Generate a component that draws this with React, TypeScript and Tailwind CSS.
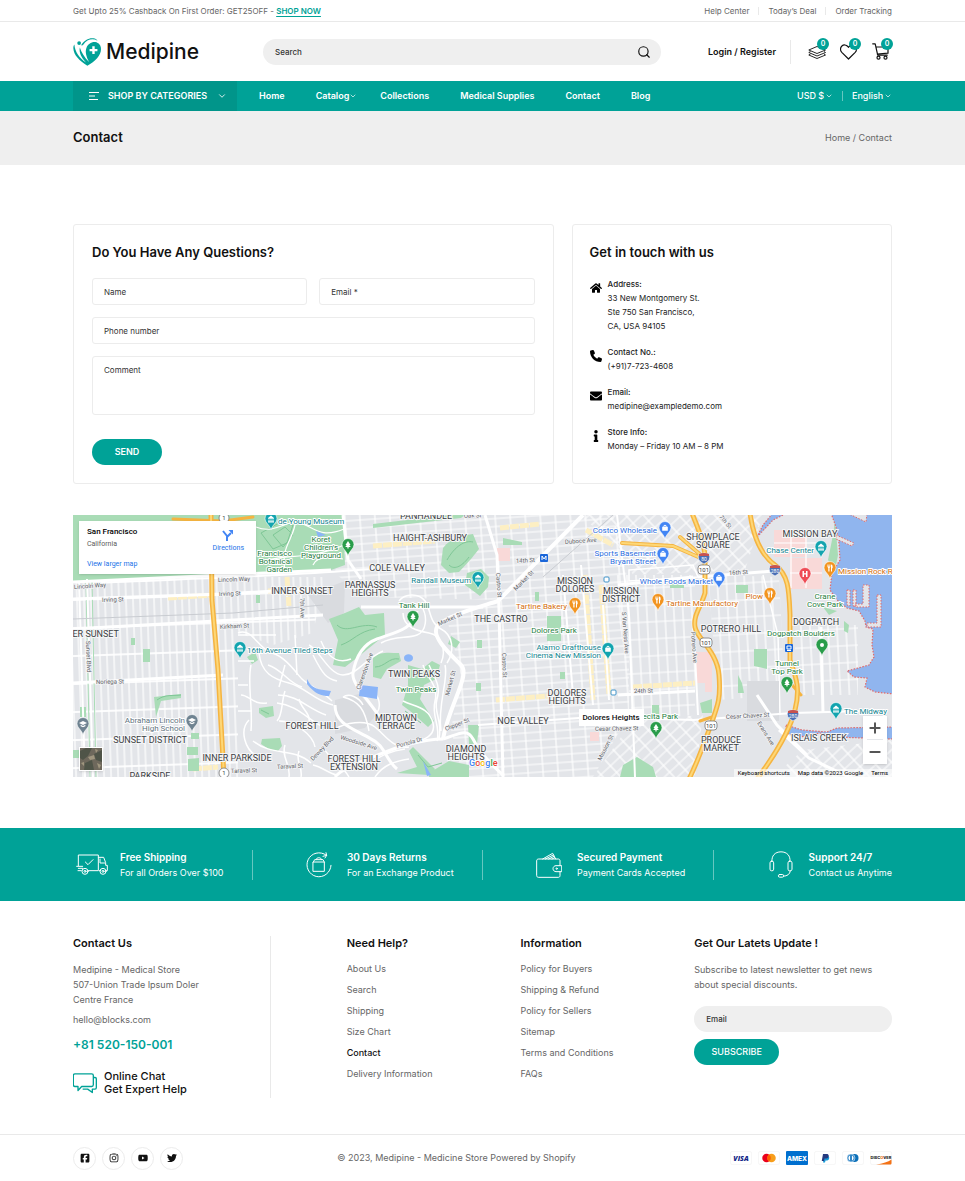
import * as React from "react"
import { ChevronDown, Minus, Plus, Search } from "lucide-react"
import { FaEnvelope, FaHome, FaInfo, FaInstagram, FaTwitter, FaYoutube } from "react-icons/fa"
import { FaPhone, FaSquareFacebook } from "react-icons/fa6"

const topLinks = ["Help Center", "Today’s Deal", "Order Tracking"]

const navItems = [
  { name: "Home" },
  { name: "Catalog", hasMenu: true },
  { name: "Collections" },
  { name: "Medical Supplies" },
  { name: "Contact" },
  { name: "Blog" },
]

const contactInfo = [
  { title: "Address:", lines: ["33 New Montgomery St.", "Ste 750 San Francisco,", "CA, USA 94105"], icon: FaHome },
  { title: "Contact No.:", lines: ["(+91)7-723-4608"], icon: FaPhone },
  { title: "Email:", lines: ["medipine@exampledemo.com"], icon: FaEnvelope },
  { title: "Store Info:", lines: ["Monday – Friday 10 AM – 8 PM"], icon: FaInfo },
]

const helpLinks = ["About Us", "Search", "Shipping", "Size Chart", "Contact", "Delivery Information"]
const infoLinks = ["Policy for Buyers", "Shipping & Refund", "Policy for Sellers", "Sitemap", "Terms and Conditions", "FAQs"]

const socials = [
  { name: "Facebook", icon: FaSquareFacebook },
  { name: "Instagram", icon: FaInstagram },
  { name: "YouTube", icon: FaYoutube },
  { name: "Twitter", icon: FaTwitter },
]

/* ---------- icons ---------- */

function LogoMark() {
  return (
    <svg viewBox="0 0 82 82" className="size-7" aria-hidden="true">
      <g fill="#00a297">
        <circle cx="18" cy="15" r="5.5" />
        <path d="M42 81C18 66 2 50 1 30c0-5 1-8 3-11 2 22 14 39 34 53C24 57 17 42 20 28c5 14 13 29 27 42-8-15-12-29-8-40 4-12 15-19 26-18 11 2 17 10 17 20 0 20-17 36-40 49z" />
        <path d="M25 19C33 7 47-1 60 1c5 1 9 3 12 7-14-8-31-5-42 12-2 3-7 3-5-1z" />
      </g>
      <path d="M60 24v23M48.500 35.500h23" stroke="#fff" strokeWidth="7" />
    </svg>
  )
}

function StackIcon() {
  return (
    <svg viewBox="0 0 20 16" className="h-4 w-5" fill="none" stroke="currentColor" strokeWidth="0.900" strokeLinejoin="round" aria-hidden="true">
      <path d="M9 2.500 17.500 6 9 9.500 .8 6z" />
      <path d="M2.500 7.500.8 8.500 9 12l8.500-3.500L16 7.500M2.500 10l-1.700 1L9 14.500l8.500-3.500L16 10" />
    </svg>
  )
}

function HeartIcon() {
  return (
    <svg viewBox="0 0 18 16" className="h-4 w-[18px]" fill="none" stroke="currentColor" strokeWidth="1.200" strokeLinejoin="round" aria-hidden="true">
      <path d="M8.500 15 1.800 8.300C0 6.400.100 3.600 1.900 2c1.800-1.600 4.400-1.300 5.900.500L8.500 3.400l.7-.9C10.700.700 13.300.400 15.100 2c1.800 1.600 1.900 4.400.1 6.300z" />
    </svg>
  )
}

function CartIcon() {
  return (
    <svg viewBox="0 0 18 17" className="h-[17px] w-[18px]" fill="none" stroke="currentColor" strokeWidth="1.200" strokeLinejoin="round" strokeLinecap="round" aria-hidden="true">
      <path d="M.7.8h2.500l2.500 11.400h9.500M4 4h12v6.200L5.300 11" />
      <circle cx="6.500" cy="14.700" r="1.500" />
      <circle cx="13.500" cy="14.700" r="1.500" />
    </svg>
  )
}

function TruckIcon() {
  return (
    <svg viewBox="0 0 96 66" className="h-[22px] w-8" fill="none" stroke="currentColor" strokeWidth="3" strokeLinejoin="round" strokeLinecap="round" aria-hidden="true">
      <path d="M7 35V3h60v47H37M7 43h13M2 37h18M6 50h10M67 10h16l6 16v8h5v16h-6M70 50h4M72 15v12h15" />
      <path d="m28 24 8 8 15-15" />
      <circle cx="27" cy="52" r="9" />
      <circle cx="27" cy="52" r="3" />
      <circle cx="81" cy="52" r="9" />
      <circle cx="81" cy="52" r="3" />
    </svg>
  )
}

function ReturnIcon() {
  return (
    <svg viewBox="0 0 78 78" className="size-[26px]" fill="none" stroke="currentColor" strokeWidth="3" strokeLinejoin="round" strokeLinecap="round" aria-hidden="true">
      <path d="M60 9A36 36 0 1 0 75 40" />
      <path d="m51 13 11-3-2-8M62 10l-5 8" />
      <path d="M22 30h33v28H22zM22 30l4-7h25l4 7M30 23c0-8 17-8 17 0" />
    </svg>
  )
}

function WalletIcon() {
  return (
    <svg viewBox="0 0 78 78" className="size-[26px]" fill="none" stroke="currentColor" strokeWidth="3" strokeLinejoin="round" strokeLinecap="round" aria-hidden="true">
      <path d="M72 40V26c0-3-2-5-5-5H8c-4 0-6 2-6 6v43c0 4 2 6 6 6h59c3 0 5-2 5-5V59" />
      <path d="M76 41H60c-5 0-9 4-9 9s4 9 9 9h16z" />
      <circle cx="62" cy="50" r="2" />
      <path d="M20 21 50 4l9 17M28 21l24-12M38 21l16-8M48 21l8-4" />
    </svg>
  )
}

function HeadsetIcon() {
  return (
    <svg viewBox="0 0 72 80" className="h-[27px] w-6" fill="none" stroke="currentColor" strokeWidth="3" strokeLinejoin="round" strokeLinecap="round" aria-hidden="true">
      <path d="M9 31C7 14 18 2 36 2s29 12 27 29M64 59c-1 10-9 16-20 16" />
      <rect x="3" y="30" width="11" height="29" rx="5" />
      <rect x="57" y="30" width="12" height="29" rx="5" />
      <rect x="28" y="70" width="16" height="8" rx="4" />
    </svg>
  )
}

function ChatIcon() {
  return (
    <svg viewBox="0 0 72 62" className="h-[21px] w-6" fill="none" stroke="#00a297" strokeWidth="4" strokeLinejoin="round" aria-hidden="true">
      <path d="M6 2h50c3 0 5 2 5 5v28c0 3-2 5-5 5H26L15 52V40H6c-3 0-5-2-5-5V7c0-3 2-5 5-5z" />
      <path d="M62 13h4c3 0 4 2 4 4v26c0 3-1 5-4 5h-8v10L44 48H29" />
    </svg>
  )
}

const features = [
  { title: "Free Shipping", text: "For all Orders Over $100", icon: TruckIcon },
  { title: "30 Days Returns", text: "For an Exchange Product", icon: ReturnIcon },
  { title: "Secured Payment", text: "Payment Cards Accepted", icon: WalletIcon },
  { title: "Support 24/7", text: "Contact us Anytime", icon: HeadsetIcon },
]

/* ---------- map ---------- */

const areas: { x: number; y: number; lines: string[] }[] = [
  { x: 353, y: 4, lines: ["PANHANDLE"] },
  { x: 229, y: 79, lines: ["INNER SUNSET"] },
  { x: 357, y: 26, lines: ["HAIGHT-ASHBURY"] },
  { x: 324, y: 56, lines: ["COLE VALLEY"] },
  { x: 297, y: 73, lines: ["PARNASSUS", "HEIGHTS"] },
  { x: 428, y: 107, lines: ["THE CASTRO"] },
  { x: 502, y: 69, lines: ["MISSION", "DOLORES"] },
  { x: 548, y: 79, lines: ["MISSION", "DISTRICT"] },
  { x: 640, y: 25, lines: ["SHOWPLACE", "SQUARE"] },
  { x: 737, y: 22, lines: ["MISSION BAY"] },
  { x: 658, y: 117, lines: ["POTRERO HILL"] },
  { x: 743, y: 110, lines: ["DOGPATCH"] },
  { x: 341, y: 162, lines: ["TWIN PEAKS"] },
  { x: 14, y: 122, lines: ["OUTER SUNSET"] },
  { x: 77, y: 228, lines: ["SUNSET DISTRICT"] },
  { x: 164, y: 246, lines: ["INNER PARKSIDE"] },
  { x: 77, y: 264, lines: ["PARKSIDE"] },
  { x: 239, y: 214, lines: ["FOREST HILL"] },
  { x: 281, y: 247, lines: ["FOREST HILL", "EXTENSION"] },
  { x: 323, y: 206, lines: ["MIDTOWN", "TERRACE"] },
  { x: 393, y: 237, lines: ["DIAMOND", "HEIGHTS"] },
  { x: 450, y: 209, lines: ["NOE VALLEY"] },
  { x: 494, y: 181, lines: ["DOLORES", "HEIGHTS"] },
  { x: 648, y: 228, lines: ["PRODUCE", "MARKET"] },
  { x: 746, y: 226, lines: ["ISLAIS CREEK"] },
]

const TEAL = "#12a4af"
const TEAL_TEXT = "#108490"
const GREEN = "#2a9d4b"
const GREEN_TEXT = "#1e7e3e"
const ORANGE = "#f29420"
const ORANGE_TEXT = "#d56e0c"
const BLUE = "#4285f4"
const BLUE_TEXT = "#2b6de0"
const GRAY = "#6f8391"
const GRAY_TEXT = "#5f7380"
const RED = "#ee4c56"

const places: { x: number; y: number; color: string; anchor: "start" | "middle" | "end"; lines: string[] }[] = [
  { x: 205, y: 9, color: TEAL_TEXT, anchor: "start", lines: ["de Young Museum"] },
  { x: 248, y: 27, color: GREEN_TEXT, anchor: "middle", lines: ["Koret", "Children's", "Playground"] },
  { x: 219, y: 41, color: GREEN_TEXT, anchor: "end", lines: ["San Francisco", "Botanical", "Garden"] },
  { x: 174, y: 138, color: TEAL_TEXT, anchor: "start", lines: ["16th Avenue Tiled Steps"] },
  { x: 112, y: 208, color: GRAY_TEXT, anchor: "end", lines: ["Abraham Lincoln", "High School"] },
  { x: 398, y: 68, color: TEAL_TEXT, anchor: "end", lines: ["Randall Museum"] },
  { x: 341, y: 93, color: GREEN_TEXT, anchor: "middle", lines: ["Tank Hill"] },
  { x: 343, y: 177, color: GREEN_TEXT, anchor: "middle", lines: ["Twin Peaks"] },
  { x: 494, y: 94, color: ORANGE_TEXT, anchor: "end", lines: ["Tartine Bakery"] },
  { x: 481, y: 118, color: GREEN_TEXT, anchor: "middle", lines: ["Dolores Park"] },
  { x: 528, y: 135, color: TEAL_TEXT, anchor: "end", lines: ["Alamo Drafthouse", "Cinema New Mission"] },
  { x: 584, y: 18, color: BLUE_TEXT, anchor: "end", lines: ["Costco Wholesale"] },
  { x: 583, y: 41, color: BLUE_TEXT, anchor: "end", lines: ["Sports Basement", "Bryant Street"] },
  { x: 640, y: 69, color: BLUE_TEXT, anchor: "end", lines: ["Whole Foods Market"] },
  { x: 593, y: 91, color: ORANGE_TEXT, anchor: "start", lines: ["Tartine Manufactory"] },
  { x: 690, y: 84, color: ORANGE_TEXT, anchor: "end", lines: ["Plow"] },
  { x: 741, y: 38, color: TEAL_TEXT, anchor: "end", lines: ["Chase Center"] },
  { x: 765, y: 59, color: ORANGE_TEXT, anchor: "start", lines: ["Mission Rock Resort"] },
  { x: 752, y: 84, color: GREEN_TEXT, anchor: "middle", lines: ["Crane", "Cove Park"] },
  { x: 728, y: 121, color: GREEN_TEXT, anchor: "middle", lines: ["Dogpatch Boulders"] },
  { x: 714, y: 151, color: GREEN_TEXT, anchor: "middle", lines: ["Tunnel", "Top Park"] },
  { x: 771, y: 199, color: TEAL_TEXT, anchor: "start", lines: ["The Midway"] },
  { x: 605, y: 204, color: GREEN_TEXT, anchor: "end", lines: ["Precita Park"] },
]

type Glyph = "dot" | "tree" | "fork" | "house" | "bag" | "H" | "cap"

const pins: { x: number; y: number; color: string; glyph: Glyph }[] = [
  { x: 198, y: 4, color: TEAL, glyph: "house" },
  { x: 275, y: 30, color: GREEN, glyph: "tree" },
  { x: 167, y: 133, color: TEAL, glyph: "house" },
  { x: 119, y: 206, color: GRAY, glyph: "cap" },
  { x: 10, y: 209, color: GRAY, glyph: "cap" },
  { x: 405, y: 63, color: TEAL, glyph: "house" },
  { x: 340, y: 102, color: GREEN, glyph: "tree" },
  { x: 502, y: 89, color: ORANGE, glyph: "fork" },
  { x: 535, y: 134, color: TEAL, glyph: "bag" },
  { x: 592, y: 13, color: BLUE, glyph: "bag" },
  { x: 590, y: 39, color: BLUE, glyph: "bag" },
  { x: 646, y: 63, color: BLUE, glyph: "bag" },
  { x: 585, y: 85, color: ORANGE, glyph: "fork" },
  { x: 697, y: 79, color: ORANGE, glyph: "fork" },
  { x: 748, y: 32, color: TEAL, glyph: "house" },
  { x: 732, y: 59, color: RED, glyph: "H" },
  { x: 757, y: 53, color: ORANGE, glyph: "fork" },
  { x: 749, y: 130, color: GREEN, glyph: "dot" },
  { x: 714, y: 168, color: GREEN, glyph: "tree" },
  { x: 763, y: 194, color: TEAL, glyph: "house" },
  { x: 583, y: 213, color: GREEN, glyph: "tree" },
]

const glyphPaths: Record<Glyph, string> = {
  dot: "M-2 0a2 2 0 1 0 4 0a2 2 0 1 0-4 0",
  tree: "M0-4 2.500 0H1.200L2.800 2H.6v1.600H-.6V2h-2.200L-1.200 0h-1.300z",
  fork: "M-2.500-3.500h.6v2h.5v-2h.6v2h.5v-2h.6V-1l-.8 1v3.500h-1.200V0l-.8-1zM1-3.500c1.500 0 1.800 1.500 1.600 3.800H2v3.200H1z",
  house: "M-3-1 0-3.500 3-1v.8H-3zM-2.500.5h1v2h-1zM-.5.5h1v2h-1zM1.500.5h1v2h-1zM-3 2.600h6v.8h-6z",
  bag: "M-2.800-1.200h1.200c0-2.800 3.200-2.800 3.200 0h1.200v4h-5.600zM-.8-1.200H.8c0-1.400-1.600-1.400-1.600 0z",
  H: "M-2.500-3h1.500v2.200h2V-3h1.500v6H1V.6h-2V3h-1.500z",
  cap: "M0-3 4-1 0 1-4-1zM-2.400.8 0 2l2.400-1.200v1.400L0 3.200l-2.400-1z",
}

const streetNames: { x: number; y: number; rotate: number; name: string }[] = [
  { x: 1, y: 74, rotate: -4, name: "Lincoln Way" },
  { x: 145, y: 67, rotate: -2, name: "Lincoln Way" },
  { x: 29, y: 87, rotate: -2, name: "Irving St" },
  { x: 146, y: 81, rotate: -2, name: "Irving St" },
  { x: 147, y: 114, rotate: -3, name: "Kirkham St" },
  { x: 23, y: 169, rotate: -1, name: "Noriega St" },
  { x: 13, y: 126, rotate: 88, name: "Sunset Blvd" },
  { x: 227, y: 83, rotate: 88, name: "7th Ave" },
  { x: 158, y: 258, rotate: -2, name: "Taraval St" },
  { x: 204, y: 254, rotate: -3, name: "Taraval St" },
  { x: 240, y: 246, rotate: -46, name: "Dewey Blvd" },
  { x: 267, y: 224, rotate: 17, name: "Woodside Ave" },
  { x: 324, y: 233, rotate: -16, name: "Portola Dr" },
  { x: 373, y: 216, rotate: -22, name: "Clipper St" },
  { x: 376, y: 181, rotate: -75, name: "Market St" },
  { x: 366, y: 111, rotate: -24, name: "Market St" },
  { x: 443, y: 76, rotate: -45, name: "Market St" },
  { x: 287, y: 175, rotate: -70, name: "Clarendon Ave" },
  { x: 391, y: 3, rotate: -3, name: "Oak St" },
  { x: 443, y: 48, rotate: -3, name: "14th St" },
  { x: 492, y: 29, rotate: -4, name: "Duboce Ave" },
  { x: 423, y: 58, rotate: 86, name: "Castro St" },
  { x: 429, y: 138, rotate: 88, name: "Castro St" },
  { x: 549, y: 97, rotate: 86, name: "S Van Ness Ave" },
  { x: 618, y: 117, rotate: 86, name: "Potrero Ave" },
  { x: 656, y: 60, rotate: -3, name: "16th St" },
  { x: 561, y: 178, rotate: -1, name: "24th St" },
  { x: 653, y: 204, rotate: -3, name: "Cesar Chavez St" },
  { x: 522, y: 216, rotate: -1, name: "Cesar Chavez St" },
  { x: 684, y: 208, rotate: 58, name: "Evans Ave" },
  { x: 528, y: 246, rotate: -63, name: "Mission St" },
  { x: 646, y: 2, rotate: 50, name: "7th St" },
]

function MapArtwork() {
  return (
    <svg
      viewBox="0 0 819 262"
      preserveAspectRatio="xMidYMid slice"
      className="block h-[262px] w-full"
      fontFamily="Roboto, sans-serif"
      role="img"
      aria-label="Map of San Francisco"
    >
      <defs>
        <pattern id="avenues" width="7" height="28" patternUnits="userSpaceOnUse" patternTransform="rotate(-2)">
          <path d="M1 0V28" stroke="#fff" strokeWidth="1.200" />
          <path d="M0 1H7" stroke="#fff" strokeWidth="1.800" />
        </pattern>
        <pattern id="blocks" width="15" height="8" patternUnits="userSpaceOnUse" patternTransform="rotate(-4)">
          <path d="M1 0V8M0 1H15" stroke="#fff" strokeWidth="1.200" />
        </pattern>
        <pattern id="mission" width="9" height="17" patternUnits="userSpaceOnUse" patternTransform="rotate(-3)">
          <path d="M1 0V17M0 1H9" stroke="#fff" strokeWidth="1.200" />
        </pattern>
        <pattern id="diagonal" width="13" height="9" patternUnits="userSpaceOnUse" patternTransform="rotate(-43)">
          <path d="M1 0V9M0 1H13" stroke="#fff" strokeWidth="1.200" />
        </pattern>
      </defs>

      <rect width="819" height="262" fill="#e3e5e9" />

      {/* street grids */}
      <path d="M0 62H252L240 118 200 130 165 118 165 262H0z" fill="url(#avenues)" />
      <path d="M270 0H510L430 85 290 82 262 58z" fill="url(#blocks)" />
      <path d="M373 100 430 85 432 262H390L378 215 388 160z" fill="url(#blocks)" />
      <path d="M430 85 510 0H540L556 70 556 200 520 262H430z" fill="url(#blocks)" />
      <path d="M540 60H622V200L560 205z" fill="url(#mission)" />
      <path d="M635 60 706 62 712 180 645 185z" fill="url(#mission)" />
      <path d="M722 110H785V180H722z" fill="url(#mission)" />
      <path d="M505 0H690L672 55 560 60 545 30z" fill="url(#diagonal)" />
      <path d="M560 205 630 200 622 262H520z" fill="url(#diagonal)" />
      <path d="M730 235 819 225V262H700z" fill="url(#diagonal)" />
      <path d="M556 55 620 50 625 62 556 66zM690 60l15 60 2 80" fill="none" stroke="#fff" strokeWidth="1.500" />

      {/* hospitals and campuses */}
      <g fill="#f9d9d8">
        <path d="M701 15h33v27h-33zM717 43h32v31h-32zM424 33h13v13h-13zM623 137h16v31h-16zM517 217h9v9h-9zM632 168h7v9h-7z" />
      </g>
      <path d="M718 15v58M733 15v58M701 28h48M717 58h32" fill="none" stroke="#fff" strokeWidth="1.200" />
      <g fill="#d9dbdf">
        <path d="M235 80 272 66 271 98 255 108zM674 166h32v40h-32zM262 185l24-6 18 20-12 14-30 6z" />
      </g>

      {/* commercial strips */}
      <g stroke="#fdefc3" strokeWidth="5" fill="none" strokeDasharray="9 1">
        <path d="M95 83 140 80M195 76 230 74M214 62 216 92M300 31 362 26M427 13 467 9M512 60 520 185M528 70 536 180M423 185 475 181M560 172 622 168M513 15 540 30M120 254 145 252" />
      </g>

      {/* parks */}
      <g fill="#a9dcb6">
        <path d="M0 0H270L272 50 258 55 150 60 0 67z" />
        <path d="M300 9 377 0H392L388 3 300 13z" />
        <path d="M370 33C378 22 392 20 400 19L406 34 398 44 386 57 376 58 368 50z" />
        <path d="M394 58l14-4 8 8-1 10-8 9-8-6-7-5z" />
        <path d="M272 98 256 104 265 125 260 150 272 152 285 142 312 120 311 98 292 100 286 92z" />
        <path d="M300 142c8-6 18-4 26-4l2 8-14 8-6 10-8-2zM335 150l14 4 10-8 8 4-4 14-12 6-4 14 14 22-6 6-18-16-8-6 6-20z" />
        <path d="M430 23 449 27V30H430zM462 77h4v9h-4zM474 101h14v25h-14zM378 121l9 6-4 6-8-4z" />
        <path d="M340 232l22 22-6 6-32-2 20-6-8-16zM356 258l20-12 20 4v12h-40zM395 210h11l-2 19h-8z" />
        <path d="M174 142l8-5 3 8-6 4zM81 182l27-3v4l-20 3-5 16zM186 193l14-2 1 10-8 2-7-5z" />
        <path d="M70 134h7v13h-7zM58 123h4v7h-4zM7 192h6v10H7zM118 218h8v6h-8zM114 232h11v8h-11zM115 244l11-1v13h-11zM183 80h4v8h-4z" />
        <path d="M189 224l18-1 2 8-4 5-8-1-9-6z" />
        <path d="M663 70h12v8h-12zM597 68h14v5h-14zM681 134h13v20l-13-3zM665 160l4 8 2 10h-6zM627 188l12-4v14h-10z" />
        <path d="M762 5 765 40 762 55 755 45 760 20zM771 106l5 4-1 8-4-2zM750 92l14 4-8 4zM550 250l14-8 16 10 3 10h-36zM579 190h7v14h-7z" />
        <path d="M0 235h8v8H0zM404 125h5v8h-5zM403 168h5v8h-5zM487 157h5v7h-5z" />
      </g>
      <path d="M13 66 17 262M19 66 23 262" fill="none" stroke="#a9dcb6" strokeWidth="1" />
      <g fill="none" stroke="#7fc796" strokeWidth="1">
        <path d="M374 45c8-14 18-20 26-18M376 50c6 6 14 0 20-8M302 152c10 0 14-10 24-8M332 196l16 12M200 20l12-8 8 8-10 12z" />
        <path d="M188 18l18-10 14 2-6 18-14 6zM188 195l8 4M345 240l10 12 14-4M264 110c10 10 24-4 40 2M268 130c12-4 18-14 34-16M84 185c8-6 16-4 24-5" />
      </g>
      <g fill="none" stroke="#fff" strokeWidth="1.200">
        <path d="M183 12c20 8 30-8 44-4s20 16 44 6M222 10c-4 18-14 22-10 46M185 48c24-10 50-2 86-18M240 50c4-10 20-8 30-6" />
      </g>

      {/* curved hillside streets */}
      <g fill="none" stroke="#fff" strokeWidth="1.500">
        <path d="M165 118c14-6 20 16 34 20s24 20 30 26 20 12 30 22M178 150c-4 18 2 40 0 66M186 138c2 20 14 26 30 30s26 18 44 22" />
        <path d="M205 180c20 0 30 14 48 20M204 188c20 2 30 16 46 24M206 206c16 0 34 14 36 26M180 226c20 16 40 6 58 22M176 205c-10 10-4 30 8 36" />
        <path d="M262 214c10-6 30-10 40-2s18 22 34 20M296 216c-4-22-10-30-26-34M302 200c8-8 4-20-4-24M290 190c-4-8-14-12-20-8" />
        <path d="M308 128c14-8 26-4 36-8s10-18 6-26M330 98c0 14 14 18 26 20s18 16 12 30M326 86c6-8 20-8 26 0s4 22 16 28 14 22 6 34M350 150c4 14 16 20 12 36s6 24 2 40M356 150c6 14 12 20 8 34s6 20 2 40M372 150c4 14-8 40-4 66" />
        <path d="M236 130c10 4 20 30 34 30s22-16 40-24M248 126c8 20 20 22 30 18M240 140c10 20 14 24 24 26" />
        <path d="M330 186c12 6 26 6 30 22s-16 18-26 22M288 256c14-14 28-20 44-22M302 262c8-12 20-16 34-18M240 250c10 2 14 8 24 10M250 232c6 12 18 16 26 30" />
        <path d="M195 150c14 4 20 18 34 22M212 176c-4 12-2 24-8 30M226 184c2 10 12 14 10 24M168 180c8 0 12 10 26 8M212 230c-4 12 6 20 4 32M226 236c-4 10 4 16 2 26" />
        <path d="M20 68c90-4 170-6 250-12l30-2" strokeWidth="2" />
        <path d="M165 120h38M165 146h16M165 170h10M165 196h14M165 240h16M212 150l-6 22M222 120l2 40" />
      </g>

      {/* main streets */}
      <g fill="none" stroke="#fff" strokeWidth="3">
        <path d="M14 64 20 262M6 66 12 262" strokeWidth="2" />
        <path d="M0 67 150 60 258 55M0 84 150 79 250 73M0 114 250 100M0 168 150 160" />
        <path d="M270 0 275 45 288 64M288 92H410M412 0 424 40 426 95 430 262" />
        <path d="M544 0 556 100 562 262M621 120 625 200M530 90 536 185M490 60 500 180M508 50 520 190M405 210 520 202 620 205 720 198 790 196" strokeWidth="2" />
        <path d="M510 0 425 86C400 94 370 102 364 112S378 140 388 150 376 190 370 224" strokeWidth="4" />
        <path d="M344 96c-2 18-24 22-40 28s-22 22-24 34 20 30 34 56M370 224c-20 0-46 8-60 14S270 252 262 262M262 190c0 20 20 24 36 34 14 6 14 20 26 30" />
        <path d="M370 224c14-4 24-12 30 0s14 22 30 36M625 62 700 56M545 180 622 176M684 180l20 30 30 30M748 112l2 86M706 215l30 28 40 19M620 62 545 70" />
      </g>
      <path d="M0 104 160 98 250 90M540 0 470 62" fill="none" stroke="#c9ccd1" />

      {/* bay and channels */}
      <g fill="#90b5ee" stroke="#e26a6a" strokeWidth="1.200" strokeDasharray="1.500 1.500">
        <path d="M758-2 763 12 766 28 767 45 759 58 757 75 764 85 774 93 786 96 792 106 793 112 800 114 799 130 801 142 796 150 774 156 781 162 794 163 792 172 802 177 821 179V-2z" />
        <path d="M713 210 729 215 754 217 764 213 821 212V224L762 222 747 218 727 222 713 218z" />
        <path d="M684 22 700 5 714-2H700L690 10z" />
      </g>
      <g fill="#e3e5e9" stroke="#e26a6a" strokeWidth="1" strokeDasharray="1.500 1.500">
        <path d="M763 20l18 8-2 3-16-7zM790 70h6v22h-14v-3h8zM804 80h4v32h-14v-4h10zM774 75h3v16l-3-1zM780 75h3v16h-3zM776-1h18l-1 8z" />
      </g>
      <g fill="#8ab4f8">
        <path d="M234 164c6 12 14 10 24 12l-2 5c-8 0-14-2-22-12zM287 170l18 2-1 12-18-3zM331 143c0-5 9-5 9 0s-9 5-9 0zM350 246l8 14-4 1zM243 16l10 4-8 2z" />
      </g>

      {/* highways */}
      <g fill="none" strokeLinejoin="round" strokeLinecap="round">
        <g stroke="#f5b441" strokeWidth="5">
          <path d="M138 0 139 85 145 155 151 262" />
          <path d="M100 4 150 6 180 2" strokeWidth="3" />
          <path d="M619-2C624 12 630 22 632 40V78C628 92 620 100 622 112S644 136 646 160 645 190 636 215 624 248 616 264" />
          <path d="M549 28 600 31 630 44M607 22 630 42" strokeWidth="4" />
          <path d="M677-2C680 20 688 40 702 50S716 76 717 100V145C722 160 728 172 722 195S702 240 684 264" />
          <path d="M719 170 728 180M627 206l12-4" strokeWidth="3" />
        </g>
        <g stroke="#fdd777" strokeWidth="2">
          <path d="M138 0 139 85 145 155 151 262" />
          <path d="M619-2C624 12 630 22 632 40V78C628 92 620 100 622 112S644 136 646 160 645 190 636 215 624 248 616 264" />
          <path d="M549 28 600 31 630 44M607 22 630 42" />
          <path d="M677-2C680 20 688 40 702 50S716 76 717 100V145C722 160 728 172 722 195S702 240 684 264" />
        </g>
      </g>

      {/* route shields */}
      <g fontSize="6" textAnchor="middle" fill="#444">
        {[[631, 55], [633, 128], [638, 211]].map(([x, y]) => (
          <g key={y} transform={`translate(${x} ${y})`}>
            <rect x="-6" y="-5" width="12" height="9" rx="3" fill="#fff" stroke="#777" strokeWidth="0.800" />
            <text y="2">101</text>
          </g>
        ))}
        {[[151, 3], [151, 258]].map(([x, y]) => (
          <g key={y} transform={`translate(${x} ${y})`}>
            <circle r="5" fill="#fff" stroke="#777" strokeWidth="0.800" />
            <text y="2">1</text>
          </g>
        ))}
        {[[631, 43, "80"], [702, 55, "280"], [720, 200, "280"]].map(([x, y, name]) => (
          <g key={`${x}-${y}`} transform={`translate(${x} ${y})`}>
            <path d="M-5-4Q0-6 5-4Q8 2 0 6Q-8 2-5-4z" fill="#4a6fb5" stroke="#fff" strokeWidth="0.600" />
            <path d="M-5-4Q0-6 5-4L5-2H-5z" fill="#c8524f" />
            <text y="3" fontSize="5" fill="#fff">{name}</text>
          </g>
        ))}
      </g>

      {/* transit stops */}
      <g fill="#1a66d9">
        <rect x="467" y="39" width="8" height="8" rx="1" />
        <rect x="712" y="129" width="8" height="8" rx="1" />
        <path d="M469 45v-4l2 3 2-3v4M714 131h4v3h-4zM714 135.500h4" stroke="#fff" fill="none" />
        <rect x="531" y="62" width="5" height="5" rx="1" fill="#fff" stroke="#3f93c9" />
        <rect x="538" y="175" width="5" height="5" rx="1" fill="#fff" stroke="#3f93c9" />
      </g>

      <g fontSize="6" fill="#5d6166" stroke="#f2f3f5" strokeWidth="1.500" paintOrder="stroke">
        {streetNames.map((s) => (
          <text key={`${s.x}-${s.y}`} transform={`translate(${s.x} ${s.y}) rotate(${s.rotate})`}>{s.name}</text>
        ))}
      </g>

      <g fontSize="9" fill="#3c4043" stroke="#f5f6f7" strokeWidth="2" paintOrder="stroke" textAnchor="middle">
        {areas.map((a) => (
          <text key={`${a.x}-${a.y}`} x={a.x} y={a.y}>
            {a.lines.map((line, i) => (
              <tspan key={line} x={a.x} dy={i === 0 ? 0 : 8}>{line}</tspan>
            ))}
          </text>
        ))}
      </g>

      <g fontSize="8" stroke="#fff" strokeWidth="2" strokeLinejoin="round" paintOrder="stroke">
        {places.map((p) => (
          <text key={p.lines[0]} x={p.x} y={p.y} fill={p.color} textAnchor={p.anchor}>
            {p.lines.map((line, i) => (
              <tspan key={line} x={p.x} dy={i === 0 ? 0 : 8}>{line}</tspan>
            ))}
          </text>
        ))}
      </g>

      {pins.map((p) => (
        <g key={`${p.x}-${p.y}`} transform={`translate(${p.x} ${p.y})`}>
          <path d="M0 11C-1 6-6 4-6-.5a6 6 0 0 1 12 0C6 4 1 6 0 11z" fill={p.color} stroke="#fff" strokeWidth="0.600" />
          <path d={glyphPaths[p.glyph]} fill="#fff" />
        </g>
      ))}

      {/* Dolores Heights callout */}
      <rect x="506" y="194" width="65" height="17" fill="#fff" />
      <text x="538" y="205" textAnchor="middle" fontSize="8" fontWeight="500" fill="#111">Dolores Heights</text>

      <text x="396" y="251" fontSize="9" fontWeight="500" stroke="#fff" strokeWidth="1.500" paintOrder="stroke">
        <tspan fill="#4285f4">G</tspan>
        <tspan fill="#ea4335">o</tspan>
        <tspan fill="#fbbc05">o</tspan>
        <tspan fill="#4285f4">g</tspan>
        <tspan fill="#34a853">l</tspan>
        <tspan fill="#ea4335">e</tspan>
      </text>
    </svg>
  )
}

function StoreMap() {
  return (
    <section className="relative mt-[31px] overflow-hidden font-[Roboto,sans-serif]" aria-label="Store location">
      <MapArtwork />
      <div className="absolute top-[6px] left-[6px] flex h-[53px] w-[177px] justify-between bg-white px-2 pt-1 pb-1 shadow-sm">
        <div className="flex flex-col">
          <strong className="text-[8px] leading-[14px] font-medium text-black">San Francisco</strong>
          <span className="text-[7px] leading-[10px] text-[#5b5b5b]">California</span>
          <a href="#map" className="mt-auto text-[7px] leading-[12px] text-[#1a73e8]">View larger map</a>
        </div>
        <a href="#directions" className="mr-1 flex flex-col items-center pt-1 text-[7px] leading-[10px] text-[#1a73e8]">
          <svg viewBox="0 0 12 12" className="mb-[2px] size-3" fill="none" stroke="#4285f4" strokeWidth="2" aria-hidden="true">
            <path d="M5 12V8L9 4M1 2l4 5" />
            <path d="M6.500 1H11v4.500z" fill="#4285f4" stroke="none" />
          </svg>
          Directions
        </a>
      </div>
      <button type="button" aria-label="Satellite view" className="absolute bottom-[6px] left-[6px] size-6 border border-white shadow">
        <svg viewBox="0 0 22 22" className="size-full" aria-hidden="true">
          <rect width="22" height="22" fill="#6e685c" />
          <path d="M0 3 6 0H12L8 8 3 12 0 10zM14 6 22 2V14L16 12zM5 15 12 12 14 22H4z" fill="#4f5448" />
          <path d="M8 9 14 7 15 11 10 12zM17 15l4 2-2 4zM1 15l3-1v4zM15 1l3 1-2 3z" fill="#a0967f" />
        </svg>
      </button>
      <div className="absolute right-[5px] bottom-[13px] flex w-6 flex-col items-center divide-y divide-gray-200 bg-white px-1 text-[#555] shadow">
        <button type="button" aria-label="Zoom in" className="flex h-6 w-full items-center justify-center">
          <Plus size={16} strokeWidth={3} />
        </button>
        <button type="button" aria-label="Zoom out" className="flex h-6 w-full items-center justify-center">
          <Minus size={16} strokeWidth={3} />
        </button>
      </div>
      <div className="absolute right-0 bottom-0 flex gap-2 bg-white/60 pr-1 pl-1 text-[6px] leading-[8px] text-black">
        <span>Keyboard shortcuts</span>
        <span>Map data ©2023 Google</span>
        <a href="#terms">Terms</a>
      </div>
    </section>
  )
}

/* ---------- header ---------- */

function Wrap({ className = "", children }: { className?: string; children: React.ReactNode }) {
  return <div className={`px-[73px] ${className}`}>{children}</div>
}

function CountLink({ label, children }: { label: string; children: React.ReactNode }) {
  return (
    <a href="#" aria-label={label} className="relative flex h-6 w-5 items-center">
      {children}
      <span className="absolute -top-[2px] left-[9px] flex size-3 items-center justify-center rounded-full bg-[#00a297] text-[7px] leading-none font-semibold text-white">0</span>
    </a>
  )
}

function Header() {
  return (
    <header>
      <div className="border-b border-[#e9e9e9]">
        <Wrap className="flex h-[21px] items-center justify-between text-[8px] text-[#666]">
          <p>
            Get Upto 25% Cashback On First Order: GET25OFF -{" "}
            <a href="#" className="font-semibold text-[#00a297] underline underline-offset-2">SHOP NOW</a>
          </p>
          <ul className="flex divide-x divide-[#e9e9e9]">
            {topLinks.map((name) => (
              <li key={name} className="px-[9px] leading-[8px] last:pr-0">
                <a href="#">{name}</a>
              </li>
            ))}
          </ul>
        </Wrap>
      </div>

      <Wrap className="flex h-[59px] items-center">
        <a href="#" className="flex w-[190px] shrink-0 items-center gap-[5px] text-[21px] font-medium text-[#111]">
          <LogoMark />
          Medipine
        </a>
        <form className="flex h-[26px] flex-1 items-center rounded-full bg-[#efefef] pr-[10px] pl-3" onSubmit={(e) => e.preventDefault()}>
          <label htmlFor="site-search" className="sr-only">Search</label>
          <input id="site-search" type="search" placeholder="Search" className="min-w-0 flex-1 bg-transparent text-[8px] font-medium outline-none placeholder:text-[#333]" />
          <button type="submit" aria-label="Search">
            <Search size={14} strokeWidth={2} className="text-[#111]" />
          </button>
        </form>
        <a href="#" className="ml-[47px] text-[9px] font-semibold text-[#111]">Login / Register</a>
        <div className="ml-[14px] flex items-center gap-3 border-l border-[#e9e9e9] pl-[17px] text-[#111]">
          <CountLink label="Compare"><StackIcon /></CountLink>
          <CountLink label="Wishlist"><HeartIcon /></CountLink>
          <CountLink label="Cart"><CartIcon /></CountLink>
        </div>
      </Wrap>

      <div className="bg-[#00a297] text-[9px] font-semibold text-white">
        <Wrap className="flex h-[30px] items-center">
          <button type="button" className="flex h-full w-[164px] items-center bg-[#01958a] pr-[10px] pl-4">
            <svg viewBox="0 0 10 8" className="mr-[9px] h-2 w-[10px]" stroke="currentColor" aria-hidden="true">
              <path d="M0 .5h10M0 4h6M0 7.500h9" />
            </svg>
            SHOP BY CATEGORIES
            <ChevronDown size={10} className="ml-auto" />
          </button>
          <nav className="ml-[22px] flex gap-[31px]">
            {navItems.map((item) => (
              <a key={item.name} href="#" className="flex items-center whitespace-nowrap">
                {item.name}
                {item.hasMenu && <ChevronDown size={8} className="-mr-2" />}
              </a>
            ))}
          </nav>
          <div className="ml-auto flex items-center font-medium">
            <label htmlFor="currency" className="sr-only">Currency</label>
            <select id="currency" className="appearance-none bg-transparent">
              <option>USD $</option>
            </select>
            <ChevronDown size={8} />
            <span className="mx-[9px] h-[10px] w-px bg-white/40" />
            <label htmlFor="language" className="sr-only">Language</label>
            <select id="language" className="appearance-none bg-transparent">
              <option>English</option>
            </select>
            <ChevronDown size={8} />
          </div>
        </Wrap>
      </div>
    </header>
  )
}

/* ---------- contact ---------- */

const fieldClass =
  "block w-full rounded-[3px] border border-[#ececec] px-[11px] text-[8px] text-[#333] outline-none placeholder:text-[#333]"

function ContactForm() {
  return (
    <section className="rounded-[3px] border border-[#ececec] px-[18px] pt-[17px] pb-[18px]">
      <h2 className="text-[13px] leading-[20px] font-semibold text-[#111]">Do You Have Any Questions?</h2>
      <form className="mt-4 grid grid-cols-2 gap-3" onSubmit={(e) => e.preventDefault()}>
        <div>
          <label htmlFor="name" className="sr-only">Name</label>
          <input id="name" type="text" placeholder="Name" className={`${fieldClass} h-[27px]`} />
        </div>
        <div>
          <label htmlFor="email" className="sr-only">Email</label>
          <input id="email" type="email" required placeholder="Email *" className={`${fieldClass} h-[27px]`} />
        </div>
        <div className="col-span-2">
          <label htmlFor="phone" className="sr-only">Phone number</label>
          <input id="phone" type="tel" placeholder="Phone number" className={`${fieldClass} h-[27px]`} />
        </div>
        <div className="col-span-2">
          <label htmlFor="comment" className="sr-only">Comment</label>
          <textarea id="comment" placeholder="Comment" className={`${fieldClass} h-[59px] resize-none pt-[7px]`} />
        </div>
        <button type="submit" className="mt-3 h-[26px] w-[70px] rounded-full bg-[#00a297] text-[9px] font-semibold text-white">SEND</button>
      </form>
    </section>
  )
}

function ContactDetails() {
  return (
    <section className="rounded-[3px] border border-[#ececec] px-[17px] pt-[17px]">
      <h2 className="text-[13px] leading-[20px] font-semibold text-[#111]">Get in touch with us</h2>
      <ul className="mt-[15px] flex flex-col gap-3">
        {contactInfo.map((item) => (
          <li key={item.title} className="flex gap-[6px] text-[8px] leading-[14px] text-[#222]">
            <item.icon size={12} className="mt-[5px] shrink-0 text-black" />
            <div>
              <h3 className="font-medium">{item.title}</h3>
              {item.lines.map((line) => (
                <p key={line}>{line}</p>
              ))}
            </div>
          </li>
        ))}
      </ul>
    </section>
  )
}

function Features() {
  return (
    <section className="mt-[51px] bg-[#00a297] text-white">
      <Wrap>
        <ul className="flex h-[73px] items-center justify-between">
          {features.map((item) => (
            <li key={item.title} className="flex h-[30px] items-center gap-3 border-r border-white/40 pr-7 pl-[3px] last:border-0 last:pr-0">
              <span className="flex w-8 justify-center"><item.icon /></span>
              <div>
                <h3 className="text-[10px] leading-[16px] font-semibold">{item.title}</h3>
                <p className="text-[9px] leading-[15px]">{item.text}</p>
              </div>
            </li>
          ))}
        </ul>
      </Wrap>
    </section>
  )
}

/* ---------- footer ---------- */

function LinkColumn({ title, links, current }: { title: string; links: string[]; current?: string }) {
  return (
    <nav aria-label={title}>
      <h2 className="text-[11px] leading-[14px] font-semibold text-[#111]">{title}</h2>
      <ul className="mt-[11px] flex flex-col gap-[6px] text-[9px] leading-[15px] text-[#666]">
        {links.map((name) => (
          <li key={name}>
            <a href="#" className={name === current ? "font-medium text-[#111]" : ""}>{name}</a>
          </li>
        ))}
      </ul>
    </nav>
  )
}

function PaymentCards() {
  const card = "h-[14px] w-[22px]"
  return (
    <ul className="flex gap-[6px]" aria-label="Payment methods">
      <li>
        <svg viewBox="0 0 44 28" className={card}>
          <rect x="1" y="1" width="42" height="26" rx="3" fill="#fff" stroke="#eee" />
          <text x="22" y="19" textAnchor="middle" fontSize="14" fontWeight="800" fontStyle="italic" fontFamily="Open Sans, sans-serif" fill="#142688">VISA</text>
        </svg>
      </li>
      <li>
        <svg viewBox="0 0 44 28" className={card} aria-label="Mastercard">
          <rect x="1" y="1" width="42" height="26" rx="3" fill="#fff" stroke="#eee" />
          <circle cx="17" cy="14" r="8.500" fill="#eb001b" />
          <circle cx="27" cy="14" r="8.500" fill="#f79e1b" />
          <path d="M22 7a8.500 8.500 0 0 1 0 14 8.500 8.500 0 0 1 0-14z" fill="#ff5f00" />
        </svg>
      </li>
      <li>
        <svg viewBox="0 0 44 28" className={card}>
          <rect width="44" height="28" rx="2" fill="#006fcf" />
          <text x="22" y="19" textAnchor="middle" fontSize="13" fontWeight="800" fontFamily="Inter, sans-serif" fill="#fff">AMEX</text>
        </svg>
      </li>
      <li>
        <svg viewBox="0 0 44 28" className={card} aria-label="PayPal">
          <rect x="1" y="1" width="42" height="26" rx="3" fill="#fff" stroke="#eee" />
          <path d="M20 10h6c5 0 5 4 4 6s-3 3-6 3h-1l-1 4h-4z" fill="#179bd7" />
          <path d="M18 6h7c5 0 5 4 4 6s-3 3-6 3h-2l-1 5h-4.500z" fill="#253b80" />
        </svg>
      </li>
      <li>
        <svg viewBox="0 0 44 28" className={card} aria-label="Diners Club">
          <rect x="1" y="1" width="42" height="26" rx="3" fill="#fff" stroke="#eee" />
          <path d="M20 6h5a8 8 0 0 1 0 16h-5z" fill="#0b6fb8" />
          <circle cx="18" cy="14" r="8" fill="#3086c8" stroke="#fff" />
          <path d="M16 9a5.500 5.500 0 0 0 0 10zM20 9v10a5.500 5.500 0 0 0 0-10z" fill="#fff" />
        </svg>
      </li>
      <li>
        <svg viewBox="0 0 44 28" className={card}>
          <rect x="1" y="1" width="42" height="26" rx="3" fill="#fff" stroke="#eee" />
          <path d="M43 17v7c0 2-1 3-3 3H12c14-2 24-5 31-10z" fill="#f47216" />
          <text x="22" y="15" textAnchor="middle" fontSize="8" fontWeight="800" fontFamily="Inter, sans-serif" fill="#222">
            DISC<tspan fill="#f47216">O</tspan>VER
          </text>
        </svg>
      </li>
    </ul>
  )
}

function Footer() {
  return (
    <footer>
      <Wrap className="grid grid-cols-[274fr_174fr_174fr_198fr] pt-[35px] pb-9">
        <div className="mr-[76px] h-[162px] border-r border-[#e9e9e9] text-[9px] leading-[15px] text-[#666]">
          <h2 className="text-[11px] leading-[14px] font-semibold text-[#111]">Contact Us</h2>
          <address className="mt-3 not-italic">
            Medipine - Medical Store
            <br />
            507-Union Trade Ipsum Doler
            <br />
            Centre France
          </address>
          <a href="mailto:hello@blocks.com" className="mt-[5px] block">hello@blocks.com</a>
          <a href="tel:+81520150001" className="mt-[9px] block text-[12px] leading-[18px] font-semibold text-[#00a297]">+81 520-150-001</a>
          <a href="#chat" className="mt-4 flex items-center gap-[7px] text-[11px] leading-[13px] font-medium text-[#111]">
            <ChatIcon />
            <span>
              Online Chat
              <br />
              Get Expert Help
            </span>
          </a>
        </div>
        <LinkColumn title="Need Help?" links={helpLinks} current="Contact" />
        <LinkColumn title="Information" links={infoLinks} />
        <div>
          <h2 className="text-[11px] leading-[14px] font-semibold text-[#111]">Get Our Latets Update !</h2>
          <p className="mt-3 text-[9px] leading-[15px] text-[#666]">
            Subscribe to latest newsletter to get news
            <br />
            about special discounts.
          </p>
          <form className="mt-[14px]" onSubmit={(e) => e.preventDefault()}>
            <label htmlFor="newsletter" className="sr-only">Email</label>
            <input id="newsletter" type="email" placeholder="Email" className="block h-[26px] w-full rounded-full bg-[#efefef] px-3 text-[8px] font-medium outline-none placeholder:text-[#333]" />
            <button type="submit" className="mt-[7px] h-[26px] w-[85px] rounded-full bg-[#00a297] text-[9px] font-medium text-white">SUBSCRIBE</button>
          </form>
        </div>
      </Wrap>
      <div className="border-t border-[#e9e9e9]">
        <Wrap className="flex h-[46px] items-center justify-between">
          <ul className="flex gap-[6px]">
            {socials.map((item) => (
              <li key={item.name}>
                <a href="#" aria-label={item.name} className="flex size-[23px] items-center justify-center rounded-full border border-[#ececec] text-[#111]">
                  <item.icon size={10} />
                </a>
              </li>
            ))}
          </ul>
          <p className="text-[9px] text-[#666]">© 2023, Medipine - Medicine Store Powered by Shopify</p>
          <PaymentCards />
        </Wrap>
      </div>
    </footer>
  )
}

export default function App() {
  return (
    <div className="min-h-screen bg-white font-[Inter,sans-serif]">
      <Header />
      <div className="bg-[#efefef]">
        <Wrap className="flex h-[54px] items-center justify-between">
          <h1 className="text-[13px] font-semibold text-[#111]">Contact</h1>
          <p className="text-[9px] text-[#666]">
            <a href="#">Home</a> / Contact
          </p>
        </Wrap>
      </div>
      <main>
        <Wrap className="pt-[59px]">
          <div className="grid grid-cols-[3fr_2fr] gap-[18px]">
            <ContactForm />
            <ContactDetails />
          </div>
          <StoreMap />
        </Wrap>
        <Features />
      </main>
      <Footer />
    </div>
  )
}
